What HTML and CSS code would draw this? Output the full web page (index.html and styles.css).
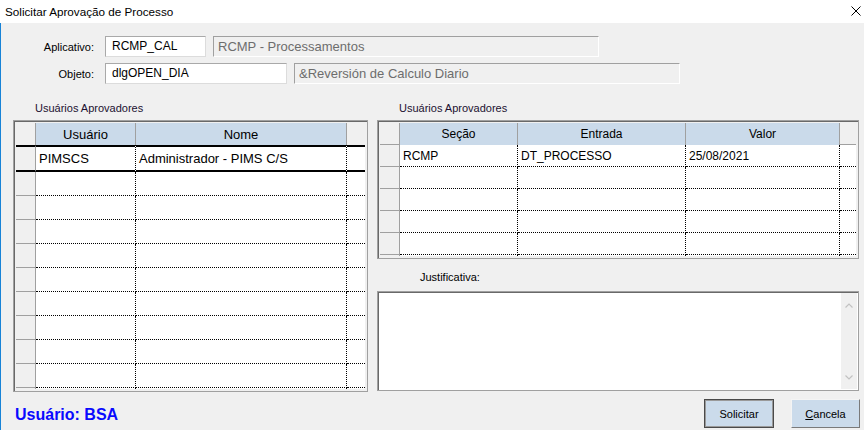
FILE: index.html
```html
<!DOCTYPE html>
<html lang="pt-BR">
<head>
<meta charset="utf-8">
<title>Solicitar Aprovação de Processo</title>
<link rel="stylesheet" href="styles.css">
</head>
<body>
<div class="window">
  <div class="titlebar">
    <span class="title">Solicitar Aprovação de Processo</span>
    <span class="close"><svg width="10" height="10" viewBox="0 0 10 10"><path d="M0.5 0.5L9.5 9.5M9.5 0.5L0.5 9.5" stroke="#000" stroke-width="1" fill="none"/></svg></span>
  </div>
  <div class="client">
    <div class="fields">
      <div class="field-row">
        <span class="lbl">Aplicativo:</span>
        <div class="edit w1">RCMP_CAL</div>
        <div class="ro">RCMP - Processamentos</div>
      </div>
      <div class="field-row">
        <span class="lbl">Objeto:</span>
        <div class="edit w2">dlgOPEN_DIA</div>
        <div class="ro">&amp;Reversión de Calculo Diario</div>
      </div>
    </div>

    <div class="panels">
      <div class="col-left">
        <div class="group-lbl">Usuários Aprovadores</div>
        <div class="grid">
          <div class="cells cells-users">
            <div class="c rh hrow"></div><div class="c hd">Usuário</div><div class="c hd">Nome</div><div class="c hx"></div>
            <div class="c rh sel"></div><div class="c sel">PIMSCS</div><div class="c sel">Administrador - PIMS C/S</div><div class="c sel last"></div>
            <div class="c rh"></div><div class="c"></div><div class="c"></div><div class="c last"></div>
            <div class="c rh"></div><div class="c"></div><div class="c"></div><div class="c last"></div>
            <div class="c rh"></div><div class="c"></div><div class="c"></div><div class="c last"></div>
            <div class="c rh"></div><div class="c"></div><div class="c"></div><div class="c last"></div>
            <div class="c rh"></div><div class="c"></div><div class="c"></div><div class="c last"></div>
            <div class="c rh"></div><div class="c"></div><div class="c"></div><div class="c last"></div>
            <div class="c rh"></div><div class="c"></div><div class="c"></div><div class="c last"></div>
            <div class="c rh"></div><div class="c"></div><div class="c"></div><div class="c last"></div>
            <div class="c rh"></div><div class="c"></div><div class="c"></div><div class="c last"></div>
            <div class="c rh"></div><div class="c"></div><div class="c"></div><div class="c last"></div>
          </div>
        </div>
      </div>

      <div class="col-right">
        <div class="group-lbl">Usuários Aprovadores</div>
        <div class="grid grid-params">
          <div class="cells cells-params">
            <div class="c rh hrow"></div><div class="c hd">Seção</div><div class="c hd">Entrada</div><div class="c hd">Valor</div><div class="c hx hrow"></div>
            <div class="c rh"></div><div class="c">RCMP</div><div class="c">DT_PROCESSO</div><div class="c">25/08/2021</div><div class="c last"></div>
            <div class="c rh"></div><div class="c"></div><div class="c"></div><div class="c"></div><div class="c last"></div>
            <div class="c rh"></div><div class="c"></div><div class="c"></div><div class="c"></div><div class="c last"></div>
            <div class="c rh"></div><div class="c"></div><div class="c"></div><div class="c"></div><div class="c last"></div>
            <div class="c rh"></div><div class="c"></div><div class="c"></div><div class="c"></div><div class="c last"></div>
            <div class="c rh"></div><div class="c"></div><div class="c"></div><div class="c"></div><div class="c last"></div>
          </div>
        </div>
        <div class="just-lbl">Justificativa:</div>
        <div class="memo">
          <div class="memo-text"></div>
          <div class="vscroll">
            <svg width="16" height="16" viewBox="0 0 16 16"><path d="M4.5 10.5L8 7L11.5 10.5" stroke="#c2c2c2" stroke-width="1.2" fill="none"/></svg>
            <svg width="16" height="16" viewBox="0 0 16 16"><path d="M4.5 6.5L8 10L11.5 6.5" stroke="#c2c2c2" stroke-width="1.2" fill="none"/></svg>
          </div>
        </div>
      </div>
    </div>

    <div class="footer">
      <span class="user">Usuário: BSA</span>
      <div class="buttons">
        <button class="btn btn-default">Solicitar</button>
        <button class="btn"><u>C</u>ancela</button>
      </div>
    </div>
  </div>
</div>
</body>
</html>
```

FILE: styles.css
```css
* { box-sizing: border-box; margin: 0; padding: 0; }
html, body { width: 864px; height: 430px; overflow: hidden; }
body { font-family: "Liberation Sans", Arial, sans-serif; background: #f0f0f0; color: #000; }

.window { width: 864px; height: 430px; display: flex; flex-direction: column; }

.titlebar {
  height: 23px; flex: none; background: #fff;
  display: flex; align-items: center; justify-content: space-between;
  padding: 0 3px 0 5px;
}
.title { font-size: 11.7px; color: #000; }
.close { display: flex; width: 10px; height: 10px; margin-top: -1px; }

.client {
  flex: 1; background: #f0f0f0; border-left: 1px solid #1883d7;
  padding: 13px 0 0 12px;
}

.fields { display: flex; flex-direction: column; gap: 6px; }
.field-row { display: flex; align-items: center; gap: 7px; height: 21px; }
.lbl { width: 81px; margin-right: 4px; text-align: right; font-size: 11px; color: #000; }
.edit {
  height: 21px; background: #fff; border: 1px solid;
  border-color: #a9a9a9 #dcdcdc #dcdcdc #a9a9a9;
  font-size: 12px; line-height: 19px; padding-left: 6px; white-space: nowrap;
}
.w1 { width: 101px; }
.w2 { width: 182px; }
.ro {
  width: 386px; height: 21px; border: 1px solid;
  border-color: #a0a0a0 #fff #fff #a0a0a0;
  color: #6d6d6d; font-size: 13px; line-height: 19px; padding-left: 4px; white-space: nowrap;
}

.panels { display: flex; gap: 9px; margin-top: 18px; align-items: flex-start; }
.col-left { width: 355px; }
.col-right { width: 482px; }
.group-lbl { font-size: 11px; line-height: 13px; padding-left: 22px; margin-bottom: 5px; color: #1c1030; }

.grid {
  height: 272px; border: 1px solid #a0a0a0; padding: 2px;
  background: #f0f0f0; box-shadow: inset 1px 1px 0 #696969;
}
.grid-params { height: 139px; }

.cells { display: grid; overflow: hidden; background: #fff; }
.cells-users {
  height: 266px;
  grid-template-columns: 20px 100px 211px 18px;
  grid-template-rows: 22px 27px;
  grid-auto-rows: 24px;
}
.cells-params {
  height: 133px;
  grid-template-columns: 20px 118px 168px 154px 16px;
  grid-auto-rows: 22px;
}

.c {
  border-right: 1px dotted #000; border-bottom: 1px dotted #000;
  font-size: 13px; padding-left: 3px;
  display: flex; align-items: center; white-space: nowrap; overflow: hidden;
}
.cells-params .c { font-size: 12px; }
.c.last { border-right: none; }
.c.rh { background: #f0f0f0; border-right: 1px solid #a0a0a0; border-bottom: 1px solid #a0a0a0; }
.c.hd { background: #cadaea; border-right: 1px solid #a0a0a0; border-bottom: none; justify-content: center; padding: 0; }
.c.hx { background: #f0f0f0; border: none; }
.cells-users .c.rh.hrow { border-bottom: none; }
.cells-params .c.hx.hrow { border-bottom: 1px solid #a0a0a0; }
.c.sel { border-top: 2px solid #000; border-bottom: 2px solid #000; }
.c.rh.sel { border-top: 2px solid #000; border-bottom: 2px solid #000; }

.just-lbl { font-size: 11px; line-height: 13px; padding-left: 43px; margin-top: 12px; margin-bottom: 7px; color: #000; }
.memo {
  height: 100px; border: 1px solid #a0a0a0; padding: 1px;
  background: #fff; box-shadow: inset 1px 1px 0 #696969;
  display: flex;
}
.memo-text { flex: 1; background: #fff; }
.vscroll {
  width: 16px; background: #f0f0f0;
  display: flex; flex-direction: column; justify-content: space-between;
  padding: 4px 0 4px;
}
.vscroll svg { display: block; }

.footer { display: flex; align-items: center; justify-content: space-between; margin-top: 7px; height: 29px; padding-right: 4px; }
.user { font-size: 16px; font-weight: bold; color: #0a0aff; margin-left: 2px; margin-top: 3px; }
.buttons { display: flex; gap: 17px; }
.btn {
  height: 29px; width: 69px; font-family: "Liberation Sans", Arial, sans-serif; font-size: 11px; color: #000;
  background: #cbdbeb; border: 1px solid; border-color: #f4f4f4 #7a7a7a #7a7a7a #f4f4f4;
}
.btn u { text-decoration: underline; }
.btn-default { width: 70px; border: 1px solid #4a4a4a; box-shadow: inset 0 0 0 1px #9a9a9a; }
```
